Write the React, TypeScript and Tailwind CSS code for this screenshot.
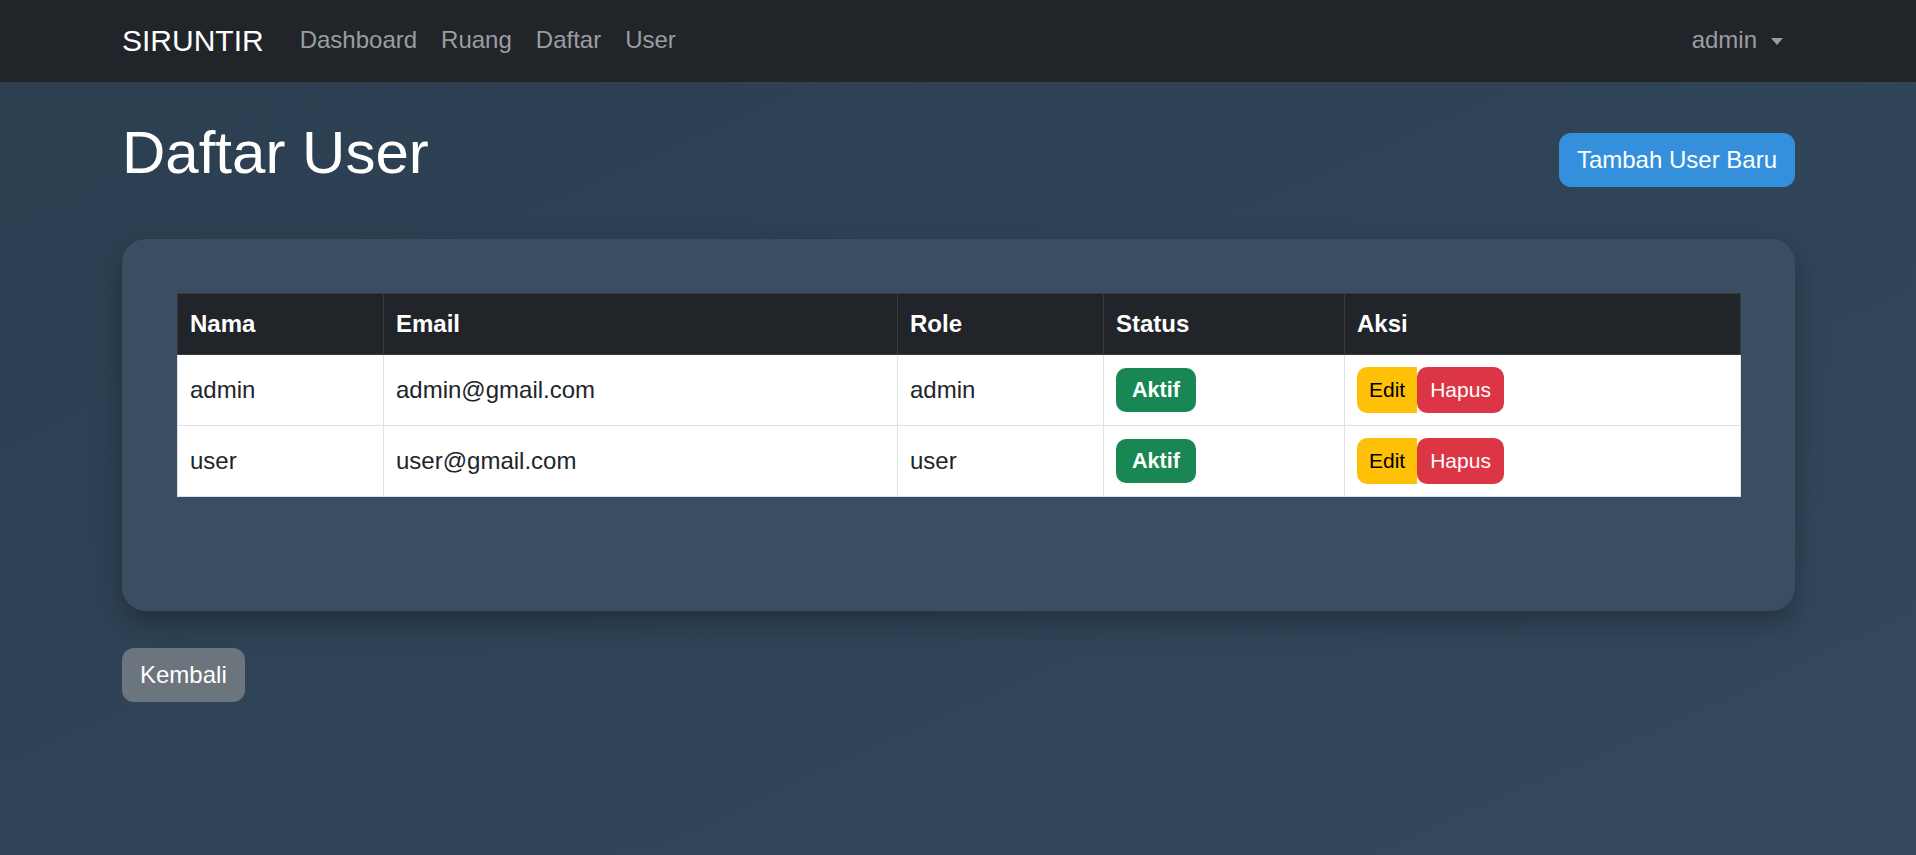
const users = [
  { name: "admin", email: "admin@gmail.com", role: "admin" },
  { name: "user", email: "user@gmail.com", role: "user" },
];

const cols = [
  { label: "Nama", w: "w-[206px]" },
  { label: "Email", w: "w-[514px]" },
  { label: "Role", w: "w-[206px]" },
  { label: "Status", w: "w-[241px]" },
  { label: "Aksi", w: "w-[396px]" },
];

const Navbar = () => (
  <nav className="h-[82px] bg-[#212529]">
    <div className="ml-[122px] mr-[121px] flex h-full items-center justify-between pb-[2px]">
      <div className="flex items-center">
        <a className="mr-[24px] text-[30px] leading-[45px] text-white">SIRUNTIR</a>
        {["Dashboard", "Ruang", "Daftar", "User"].map((item) => (
          <a key={item} className="px-[12px] text-[24px] leading-[36px] text-[#9a9da0]">
            {item}
          </a>
        ))}
      </div>
      <a className="flex items-center px-[12px] text-[24px] leading-[36px] text-[#9a9da0]">
        admin
        <span className="ml-[14px] mt-[2px] h-0 w-0 border-x-[6px] border-t-[7px] border-x-transparent border-t-[#9a9da0]" />
      </a>
    </div>
  </nav>
);

const UserTable = () => (
  <table className="w-[1563px] table-fixed border-collapse text-[24px] leading-[36px]">
    <thead>
      <tr className="bg-[#212529] text-white">
        {cols.map((c) => (
          <th
            key={c.label}
            className={`${c.w} h-[61px] border border-[#373b3e] px-[12px] text-left align-middle font-bold`}
          >
            {c.label}
          </th>
        ))}
      </tr>
    </thead>
    <tbody className="bg-white text-[#212529]">
      {users.map((u) => (
        <tr key={u.name} className="h-[71px]">
          <td className="border border-[#dee2e6] px-[12px] align-middle">{u.name}</td>
          <td className="border border-[#dee2e6] px-[12px] align-middle">{u.email}</td>
          <td className="border border-[#dee2e6] px-[12px] align-middle">{u.role}</td>
          <td className="border border-[#dee2e6] px-[12px] align-middle">
            <span className="inline-block rounded-[10px] bg-[#198754] px-[16px] py-[11px] text-[21.6px] font-bold leading-none text-white">
              Aktif
            </span>
          </td>
          <td className="border border-[#dee2e6] px-[12px] align-middle">
            <div className="flex">
              <button className="h-[46px] rounded-l-[10px] bg-[#ffc107] px-[12px] text-[21px] text-black">
                Edit
              </button>
              <button className="h-[46px] rounded-[10px] bg-[#dc3545] px-[13px] text-[21px] text-white">
                Hapus
              </button>
            </div>
          </td>
        </tr>
      ))}
    </tbody>
  </table>
);

export default function App() {
  return (
    <div className="min-h-[855px] bg-gradient-to-br from-[#2c3e50] to-[#34495e] font-['Liberation_Sans',Arial,sans-serif]">
      <Navbar />
      <main className="ml-[122px] mr-[121px] pt-[35px]">
        <div className="flex items-center justify-between">
          <h1 className="mb-[12px] text-[60px] leading-[72px] text-white">Daftar User</h1>
          <button className="mt-[1px] h-[54px] rounded-[12px] bg-[#3490dc] px-[18px] text-[24px] text-white">
            Tambah User Baru
          </button>
        </div>

        <div className="mt-[38px] rounded-[24px] bg-[#3b4d61] pb-[114px] pl-[55px] pr-[54px] pt-[54px] shadow-[0_12px_30px_rgba(0,0,0,0.3)]">
          <UserTable />
        </div>

        <button className="mt-[37px] h-[54px] rounded-[12px] bg-[#6c757d] px-[18px] text-[24px] text-white">
          Kembali
        </button>
      </main>
    </div>
  );
}
